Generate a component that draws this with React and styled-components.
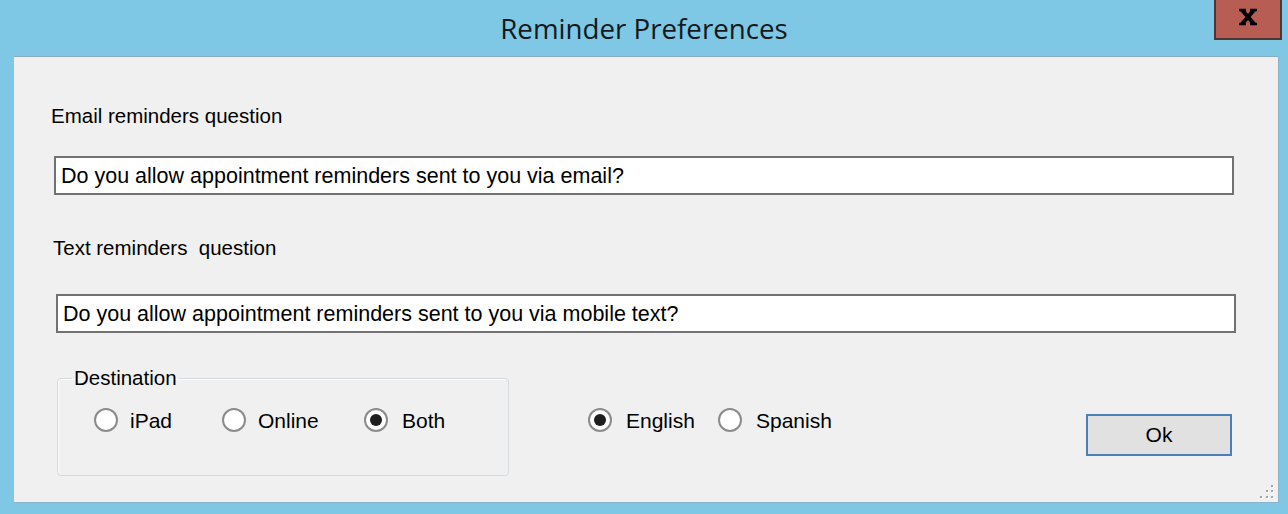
import React from 'react';
import styled, { createGlobalStyle } from 'styled-components';

const GlobalStyle = createGlobalStyle`
  html, body {
    margin: 0;
    padding: 0;
  }
  body {
    background: #7ec7e5;
    font-family: "Liberation Sans", Arial, sans-serif;
    overflow: hidden;
  }
`;

const frameBlue = '#7ec7e5';
const clientGray = '#f0f0f0';
const uiFont = '"Liberation Sans", Arial, sans-serif';

function RadioOption({ label, checked, width, gap = 14 }) {
    return (
        <RadioItem $width={width}>
            <RadioCircle>{checked && <RadioDot />}</RadioCircle>
            <RadioText $gap={gap}>{label}</RadioText>
        </RadioItem>
    );
}

function CloseGlyph() {
    return (
        <svg width="20" height="18" viewBox="0 0 20 18">
            <path d="M4 2 L16 16 M16 2 L4 16" stroke="#000" strokeWidth="4" fill="none" />
            <path d="M1 2 H8 M12 2 H19 M1 16 H8 M12 16 H19" stroke="#000" strokeWidth="2.4" fill="none" />
        </svg>
    );
}

function SizeGrip() {
    const dots = [[11, 0], [6, 5], [11, 5], [0, 11], [6, 11], [11, 11]];
    return (
        <Grip width="14" height="14" viewBox="0 0 14 14">
            {dots.map(([x, y]) => (
                <g key={`${x}-${y}`}>
                    <rect x={x + 1} y={y + 1} width="2" height="2" fill="#ffffff" />
                    <rect x={x} y={y} width="2" height="2" fill="#a3a3a3" />
                </g>
            ))}
        </Grip>
    );
}

export default function App() {
    return (
        <>
            <GlobalStyle />
            <Window>
                <TitleBar>
                    <Title>Reminder Preferences</Title>
                    <CloseButton aria-label="Close">
                        <CloseGlyph />
                    </CloseButton>
                </TitleBar>

                <Client>
                    <FieldLabel $left={37} $top={47}>Email reminders question</FieldLabel>
                    <TextBox
                        $left={40}
                        $top={28}
                        readOnly
                        value="Do you allow appointment reminders sent to you via email?"
                    />

                    <FieldLabel $left={39} $top={41}>{'Text reminders\u00a0 question'}</FieldLabel>
                    <TextBox
                        $left={42}
                        $top={34}
                        readOnly
                        value="Do you allow appointment reminders sent to you via mobile text?"
                    />

                    <BottomRow>
                        <GroupBox>
                            <GroupLegend>Destination</GroupLegend>
                            <RadioRow $left={36} $top={18}>
                                <RadioOption label="iPad" width={128} gap={12} />
                                <RadioOption label="Online" width={142} gap={12} />
                                <RadioOption label="Both" checked />
                            </RadioRow>
                        </GroupBox>

                        <RadioRow $left={79} $top={42}>
                            <RadioOption label="English" checked width={130} />
                            <RadioOption label="Spanish" />
                        </RadioRow>

                        <OkButton>Ok</OkButton>
                    </BottomRow>

                    <SizeGrip />
                </Client>
            </Window>
        </>
    );
}

const Window = styled.div`
    width: 1288px;
    height: 514px;
    display: flex;
    flex-direction: column;
    background: ${frameBlue};
`;

const TitleBar = styled.div`
    height: 56px;
    flex-shrink: 0;
    display: grid;
    grid-template-columns: 1fr auto 1fr;
    align-items: start;
`;

const Title = styled.div`
    grid-column: 2;
    padding-top: 9px;
    font-family: "Open Sans", sans-serif;
    font-size: 27.7px;
    line-height: 38px;
    color: #15191c;
    white-space: nowrap;
`;

const CloseButton = styled.button`
    grid-column: 3;
    justify-self: end;
    margin: 0 6px 0 0;
    width: 68px;
    height: 40px;
    padding: 0;
    box-sizing: border-box;
    display: flex;
    align-items: center;
    justify-content: center;
    background: #b85d53;
    border: 2px solid #4d3733;
    border-top: none;
    cursor: pointer;

    svg {
        margin-top: -4px;
    }
`;

const Client = styled.div`
    position: relative;
    margin: 0 10px 0 14px;
    height: 445px;
    border-top: 1px solid #8ca9bf;
    background: ${clientGray};
    box-shadow: 1px 1px 0 #8db3ca;
    display: flex;
    flex-direction: column;
    align-items: flex-start;
`;

const FieldLabel = styled.div`
    margin: ${p => p.$top}px 0 0 ${p => p.$left}px;
    font-family: ${uiFont};
    font-size: 20.5px;
    line-height: 24px;
    color: #000;
`;

const TextBox = styled.input`
    margin: ${p => p.$top}px 0 0 ${p => p.$left}px;
    width: 1180px;
    height: 39px;
    box-sizing: border-box;
    padding: 1px 5px 0;
    border: 2px solid #727272;
    background: #fff;
    font-family: ${uiFont};
    font-size: 21.5px;
    color: #000;
    outline: none;
`;

const BottomRow = styled.div`
    margin-top: 33px;
    width: 100%;
    display: flex;
    align-items: flex-start;
`;

const GroupBox = styled.fieldset`
    margin: 0 0 0 43px;
    padding: 0;
    width: 452px;
    height: 110px;
    box-sizing: border-box;
    border: 1px solid #d3dbe1;
    border-radius: 4px;
    box-shadow: inset 1px 1px 0 #fbfbfb;
`;

const GroupLegend = styled.legend`
    margin-left: 14px;
    padding: 0 2px;
    font-family: ${uiFont};
    font-size: 20.5px;
    line-height: 24px;
    color: #000;
`;

const RadioRow = styled.div`
    margin: ${p => p.$top}px 0 0 ${p => p.$left}px;
    display: flex;
    align-items: center;
    height: 24px;
`;

const RadioItem = styled.label`
    display: flex;
    align-items: center;
    width: ${p => (p.$width ? `${p.$width}px` : 'auto')};
    flex-shrink: 0;
`;

const RadioCircle = styled.span`
    width: 24px;
    height: 24px;
    box-sizing: border-box;
    border-radius: 50%;
    border: 2px solid #8b8b8b;
    background: radial-gradient(circle, #ffffff 60%, #f2f2f2 100%);
    display: flex;
    align-items: center;
    justify-content: center;
`;

const RadioDot = styled.span`
    width: 12px;
    height: 12px;
    border-radius: 50%;
    background: #1e1e1e;
`;

const RadioText = styled.span`
    margin-left: ${p => p.$gap}px;
    padding-top: 2px;
    font-family: ${uiFont};
    font-size: 21px;
    line-height: 24px;
    color: #000;
`;

const OkButton = styled.button`
    margin: 48px 46px 0 auto;
    width: 146px;
    height: 42px;
    box-sizing: border-box;
    padding: 0;
    border: 2px solid #4a80b3;
    background: #e1e1e1;
    font-family: ${uiFont};
    font-size: 21px;
    color: #000;
    cursor: pointer;
`;

const Grip = styled.svg`
    position: absolute;
    right: 4px;
    bottom: 3px;
`;
